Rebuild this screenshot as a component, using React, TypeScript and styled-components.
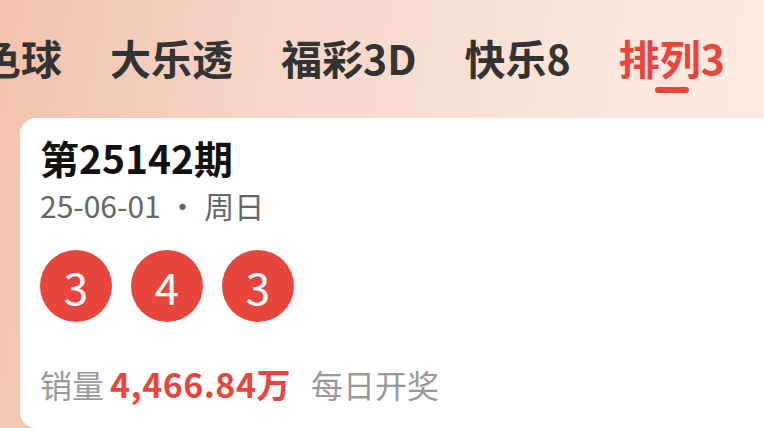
import React from 'react';
import styled, { createGlobalStyle } from 'styled-components';

const GlobalStyle = createGlobalStyle`
  html, body {
    margin: 0;
    padding: 0;
    width: 764px;
    height: 428px;
    overflow: hidden;
  }
  body {
    font-family: "Noto Sans CJK SC", "Noto Sans", sans-serif;
  }
`;

const RED = '#e8463d';

const Page = styled.div`
  width: 764px;
  height: 428px;
  overflow: hidden;
  display: flex;
  flex-direction: column;
  background: linear-gradient(100deg, #f2c2ad 0%, #f7d6c9 35%, #fbe6dc 70%, #fdece3 100%);
`;

const TabBar = styled.div`
  display: flex;
  align-items: flex-start;
  gap: 48px;
  height: 118px;
  padding-top: 32px;
  box-sizing: border-box;
  margin-left: -61px;
  white-space: nowrap;
`;

const Tab = styled.div<{ $active?: boolean }>`
  display: flex;
  flex-direction: column;
  align-items: center;
  font-size: 41px;
  line-height: 50px;
  font-weight: 700;
  color: ${(p) => (p.$active ? RED : '#333333')};
`;

const Indicator = styled.div`
  width: 34px;
  height: 6px;
  border-radius: 3px;
  margin-top: 5px;
  background: ${RED};
`;

const Card = styled.div`
  margin-left: 20px;
  width: 780px;
  height: 310px;
  box-sizing: border-box;
  border-radius: 16px;
  background: #ffffff;
  padding: 17px 20px 0;
`;

const Title = styled.div`
  font-size: 39px;
  line-height: 44px;
  font-weight: 700;
  color: #111111;
`;

const DateLine = styled.div`
  margin-top: 8px;
  font-size: 30px;
  line-height: 36px;
  color: #666666;
`;

const Balls = styled.div`
  display: flex;
  gap: 19px;
  margin-top: 27px;
`;

const Ball = styled.div`
  width: 72px;
  height: 72px;
  border-radius: 50%;
  background: ${RED};
  color: #ffffff;
  font-size: 44px;
  display: flex;
  align-items: center;
  justify-content: center;
`;

const Footer = styled.div`
  margin-top: 42px;
  font-size: 32px;
  line-height: 40px;
  color: #999999;
  display: flex;
  align-items: baseline;
`;

const Sales = styled.span`
  margin-left: 6px;
  color: ${RED};
  font-size: 34px;
  font-weight: 700;
  letter-spacing: 0.5px;
`;

const Schedule = styled.span`
  margin-left: 20px;
`;

const tabs = ['双色球', '大乐透', '福彩3D', '快乐8', '排列3'];
const numbers = [3, 4, 3];

export default function App() {
  return (
    <>
      <GlobalStyle />
      <Page>
        <TabBar>
          {tabs.map((t) => (
            <Tab key={t} $active={t === '排列3'}>
              {t}
              {t === '排列3' && <Indicator />}
            </Tab>
          ))}
        </TabBar>
        <Card>
          <Title>第25142期</Title>
          <DateLine>25-06-01 · 周日</DateLine>
          <Balls>
            {numbers.map((n, i) => (
              <Ball key={i}>{n}</Ball>
            ))}
          </Balls>
          <Footer>
            销量<Sales>4,466.84万</Sales>
            <Schedule>每日开奖</Schedule>
          </Footer>
        </Card>
      </Page>
    </>
  );
}
